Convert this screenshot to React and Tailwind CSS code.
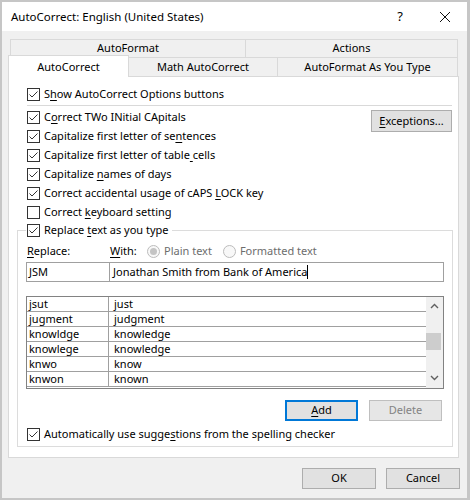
import React from 'react';

const font = "font-['Noto_Sans','Liberation_Sans',sans-serif]";

function Check({ checked = true }) {
  return (
    <span className="w-[13px] h-[13px] border border-[#333333] bg-white flex items-center justify-center shrink-0">
      {checked && (
        <svg width="11" height="11" viewBox="0 0 11 11">
          <path d="M1.5 5.5 L4 8 L9.5 2.5" fill="none" stroke="#333333" strokeWidth="1" />
        </svg>
      )}
    </span>
  );
}

// label with one underlined access key
function Label({ text, u }) {
  if (u == null) return <span>{text}</span>;
  return (
    <span>
      {text.slice(0, u)}
      <span className="underline underline-offset-2">{text[u]}</span>
      {text.slice(u + 1)}
    </span>
  );
}

function Row({ text, u, checked = true }) {
  return (
    <div className="h-[19px] flex items-center gap-[4px]">
      <Check checked={checked} />
      <Label text={text} u={u} />
    </div>
  );
}

function Radio({ on, label }) {
  return (
    <div className="flex items-center gap-[4px] text-[#6d6d6d]">
      <span className="w-[13px] h-[13px] rounded-full border border-[#bcbcbc] bg-[#f8f8f8] flex items-center justify-center">
        {on && <span className="w-[7px] h-[7px] rounded-full bg-[#c4c4c4]" />}
      </span>
      {label}
    </div>
  );
}

const entries = [
  ['jsut', 'just'],
  ['jugment', 'judgment'],
  ['knowldge', 'knowledge'],
  ['knowlege', 'knowledge'],
  ['knwo', 'know'],
  ['knwon', 'known'],
];

export default function App() {
  return (
    <div className={`${font} text-[11px] text-black w-[470px] h-[500px] border-2 border-r-[3px] border-[#c6c6c6] bg-[#f0f0f0] flex flex-col`}>
      {/* title bar */}
      <div className="h-[29px] bg-white flex items-center pl-[9px] shrink-0 text-[11.5px]">
        <span className="flex-1">AutoCorrect: English (United States)</span>
        <span className="w-[20px] text-center text-[13px] mr-[29px]">?</span>
        <svg width="12" height="12" viewBox="0 0 12 12" className="mr-[16px]">
          <path d="M1 1 L11 11 M11 1 L1 11" stroke="#111" strokeWidth="1" />
        </svg>
      </div>

      <div className="pl-[6px] pr-[7px] pt-[8px] flex flex-col">
        {/* tabs */}
        <div className="flex ml-[2px] h-[18px] w-[448px]">
          <div className="w-[235px] border border-r-0 border-b-0 border-[#d9d9d9] flex items-center justify-center">AutoFormat</div>
          <div className="flex-1 border border-b-0 border-[#d9d9d9] flex items-center justify-center">Actions</div>
        </div>
        <div className="flex h-[19px] w-[451px] items-end relative z-10">
          <div className="w-[121px] h-[22px] -mb-px bg-white border border-b-0 border-[#d9d9d9] flex items-center justify-center pt-[1px]">AutoCorrect</div>
          <div className="w-[148px] h-[19px] border-t border-[#d9d9d9] bg-[#f0f0f0] flex items-center justify-center">Math AutoCorrect</div>
          <div className="flex-1 h-[19px] border-t border-x border-[#d9d9d9] bg-[#f0f0f0] flex items-center justify-center mr-[1px]">AutoFormat As You Type</div>
        </div>

        {/* panel */}
        <div className="w-[451px] h-[382px] bg-white border border-[#d9d9d9] pl-[8px] pr-[6px] pt-[8px] flex flex-col">
          <div className="pl-[10px]">
            <Row text="Show AutoCorrect Options buttons" u={1} />
          </div>
          <div className="ml-[10px] mt-[1px] h-px bg-[#d9d9d9]" />
          <div className="flex mt-[2px] pl-[10px]">
            <div className="flex-1">
              <Row text="Correct TWo INitial CApitals" u={1} />
              <Row text="Capitalize first letter of sentences" u={29} />
              <Row text="Capitalize first letter of table cells" u={32} />
              <Row text="Capitalize names of days" u={11} />
              <Row text="Correct accidental usage of cAPS LOCK key" u={33} />
              <Row text="Correct keyboard setting" u={8} checked={false} />
            </div>
            <button className="w-[81px] h-[22px] mt-[2px] bg-[#e1e1e1] border border-[#adadad] flex items-center justify-center">
              <Label text="Exceptions..." u={0} />
            </button>
          </div>

          {/* replace group */}
          <fieldset className="border border-[#dcdcdc] px-[8px] pb-[2px] -mt-[1px]">
            <legend className="pl-[1px] pr-[3px] bg-white">
              <Row text="Replace text as you type" u={8} />
            </legend>
            <div className="flex items-center h-[18px] mt-[2px] pl-[1px]">
              <span className="w-[83px]"><Label text="Replace:" u={0} /></span>
              <span className="w-[37px]"><Label text="With:" u={0} /></span>
              <Radio on label="Plain text" />
              <span className="w-[11px]" />
              <Radio label="Formatted text" />
            </div>
            <div className="flex mt-[2px] h-[20px] w-[418px]">
              <div className="w-[84px] border border-[#a0a0a0] flex items-center pl-[2px]">JSM</div>
              <div className="flex-1 border border-l-0 border-[#a0a0a0] flex items-center pl-[3px]">
                Jonathan Smith from Bank of America<span className="w-px h-[14px] bg-black" />
              </div>
            </div>

            {/* list */}
            <div className="mt-[14px] w-[418px] h-[93px] border border-[#828282] flex">
              <div className="flex-1 flex flex-col">
                {entries.map(([a, b]) => (
                  <div key={a} className="h-[15px] leading-[14px] flex items-center border-b border-[#a0a0a0]">
                    <span className="w-[82px] h-full border-r border-[#a0a0a0] pl-[2px] flex items-center">{a}</span>
                    <span className="pl-[5px]">{b}</span>
                  </div>
                ))}
              </div>
              <div className="w-[17px] bg-[#f0f0f0] flex flex-col items-center">
                <svg width="9" height="6" viewBox="0 0 9 6" className="mt-[6px]">
                  <path d="M1 5 L4.5 1.5 L8 5" fill="none" stroke="#606060" strokeWidth="1.4" />
                </svg>
                <div className="w-[15px] h-[17px] bg-[#cdcdcd] mt-[24px] self-start" />
                <div className="flex-1" />
                <svg width="9" height="6" viewBox="0 0 9 6" className="mb-[7px]">
                  <path d="M1 1 L4.5 4.5 L8 1" fill="none" stroke="#606060" strokeWidth="1.4" />
                </svg>
              </div>
            </div>

            <div className="flex justify-end gap-[11px] mt-[11px] w-[416px]">
              <button className="w-[73px] h-[21px] bg-[#e1e1e1] border-2 border-[#0078d7] flex items-center justify-center">
                <Label text="Add" u={0} />
              </button>
              <button className="w-[73px] h-[21px] bg-[#e6e6e6] border border-[#bfbfbf] text-[#838383] flex items-center justify-center">
                Delete
              </button>
            </div>

            <div className="mt-[4px] pl-[1px]">
              <Row text="Automatically use suggestions from the spelling checker" u={23} />
            </div>
          </fieldset>
        </div>

        {/* dialog buttons */}
        <div className="flex justify-end gap-[10px] mt-[10px]">
          <button className="w-[74px] h-[21px] bg-[#e1e1e1] border border-[#adadad]">OK</button>
          <button className="w-[74px] h-[21px] bg-[#e1e1e1] border border-[#adadad]">Cancel</button>
        </div>
      </div>
    </div>
  );
}
